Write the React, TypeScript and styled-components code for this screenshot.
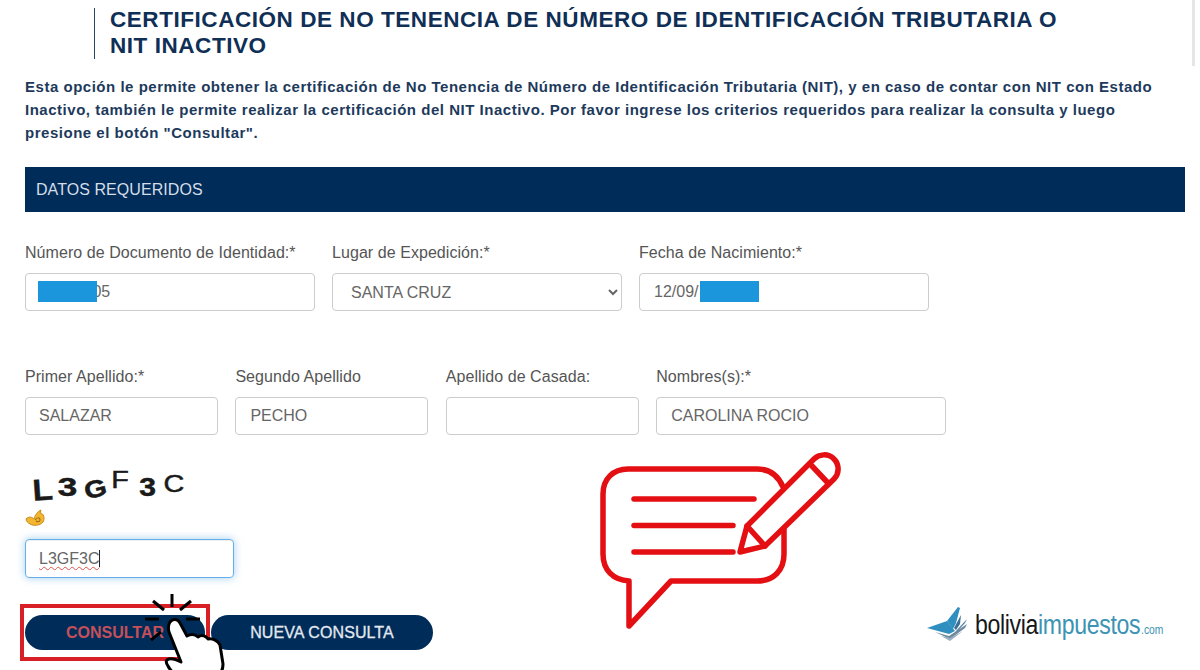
import React from "react";
import styled, { createGlobalStyle } from "styled-components";

const GlobalStyle = createGlobalStyle`
  html, body {
    margin: 0;
    padding: 0;
    background: #fff;
    overflow: hidden;
  }
  * { box-sizing: border-box; }
`;

const Page = styled.div`
  position: relative;
  width: 1200px;
  height: 670px;
  overflow: hidden;
  padding: 8px 15px 0 25px;
  font-family: "Liberation Sans", Arial, sans-serif;
  color: #555;
`;

const ScrollThumb = styled.div`
  position: absolute;
  top: 0;
  right: 5px;
  width: 3px;
  height: 66px;
  background: #e6e6e6;
`;

const TitleBlock = styled.div`
  display: flow-root;
  margin-left: 69px;
  padding-left: 15px;
  border-left: 1px solid #2a4465;
  width: 970px;
  height: 51px;
`;

const Title = styled.h1`
  margin: -1px 0 0;
  font-size: 22.5px;
  line-height: 25.5px;
  font-weight: 700;
  color: #0f2f56;
  letter-spacing: 0.55px;
`;

const Intro = styled.p`
  margin: 16px 0 0;
  font-size: 15px;
  line-height: 23px;
  font-weight: 700;
  color: #1d3a5c;
  letter-spacing: 0.52px;
  width: 1150px;
`;

const SectionBar = styled.div`
  margin-top: 23px;
  height: 45px;
  display: flex;
  align-items: center;
  padding-left: 11px;
  background: #002c5a;
  color: #d5dde6;
  font-size: 16px;
  letter-spacing: 0.06px;
`;

const FieldRow = styled.div<{ $top: number; $gap: number }>`
  display: flex;
  gap: ${(p) => p.$gap}px;
  margin-top: ${(p) => p.$top}px;
`;

const Field = styled.div<{ $width: number }>`
  width: ${(p) => p.$width}px;
  position: relative;
`;

const Label = styled.div`
  font-size: 16px;
  line-height: 17px;
  letter-spacing: 0.06px;
  color: #555;
  margin-bottom: 12px;
  white-space: nowrap;
`;

const Input = styled.input<{ $pad?: number }>`
  display: block;
  width: 100%;
  height: 38px;
  padding: 0 ${(p) => p.$pad ?? 14}px;
  border: 1px solid #ccc;
  border-radius: 4px;
  background: #fff;
  color: #666;
  font: 16px "Liberation Sans", Arial, sans-serif;
  outline: none;
`;

const SelectBox = styled.select`
  display: block;
  width: 100%;
  height: 38px;
  margin-top: 1px;
  padding: 0 14px;
  border: 1px solid #ccc;
  border-radius: 4px;
  background: #fff;
  color: #666;
  font: 16px "Liberation Sans", Arial, sans-serif;
  outline: none;
`;

const Redaction = styled.div<{ $left: number; $width: number }>`
  position: absolute;
  left: ${(p) => p.$left}px;
  bottom: 9px;
  width: ${(p) => p.$width}px;
  height: 21px;
  background: #1b96dc;
`;

const LowerArea = styled.div`
  display: flex;
  margin-top: 36px;
`;

const LeftColumn = styled.div`
  position: relative;
  width: 408px;
  flex: none;
`;

const Captcha = styled.div`
  display: flex;
  align-items: flex-end;
  height: 34px;
  padding-left: 8px;
  color: #1a1a1a;
  font-family: "Liberation Sans", Arial, sans-serif;
`;

const CaptchaChar = styled.span<{ $size: number; $w: number; $rot: number; $up: number; $sx: number; $bold?: boolean; $gap?: number }>`
  display: inline-block;
  width: ${(p) => p.$w}px;
  text-align: center;
  font-size: ${(p) => p.$size}px;
  font-weight: ${(p) => (p.$bold ? 700 : 400)};
  line-height: 1;
  margin-right: ${(p) => p.$gap ?? 2}px;
  -webkit-text-stroke: 0.5px #1a1a1a;
  transform: translateY(${(p) => -p.$up}px) rotate(${(p) => p.$rot}deg) scaleX(${(p) => p.$sx});
`;

const RefreshIcon = styled.svg`
  display: block;
  margin-top: 3px;
  width: 22px;
  height: 20px;
`;

const FocusInput = styled.div`
  display: flex;
  align-items: center;
  width: 209px;
  height: 39px;
  margin-top: 11px;
  padding-left: 13px;
  border: 1px solid #66afe9;
  border-radius: 4px;
  box-shadow: inset 0 1px 1px rgba(0, 0, 0, 0.075), 0 0 8px rgba(102, 175, 233, 0.6);
  color: #666;
  font-size: 16px;
`;

const Misspelled = styled.span`
  text-decoration: underline wavy #d9534f 1px;
  text-underline-offset: 2px;
`;

const Caret = styled.span`
  display: inline-block;
  width: 1px;
  height: 17px;
  background: #222;
`;

const ButtonRow = styled.div`
  display: flex;
  gap: 6px;
  margin-top: 37px;
`;

const PillButton = styled.button<{ $width: number; $danger?: boolean }>`
  width: ${(p) => p.$width}px;
  height: 35px;
  border: none;
  border-radius: 18px;
  background: #002c5a;
  color: ${(p) => (p.$danger ? "#c4505a" : "#e4e9ef")};
  font: 700 16px "Liberation Sans", Arial, sans-serif;
  padding: 0;
`;

const SecondaryButton = styled(PillButton)`
  font-weight: 400;
  letter-spacing: 0.1px;
  -webkit-text-stroke: 0.3px #e4e9ef;
`;

const RedFrame = styled.div`
  position: absolute;
  left: -5px;
  top: 133px;
  width: 190px;
  height: 57px;
  border: 4px solid #d81f26;
`;

const HandOverlay = styled.svg`
  position: absolute;
  left: 90px;
  top: 121px;
  width: 90px;
  height: 80px;
  overflow: visible;
`;

const ChatIcon = styled.svg`
  display: block;
  flex: none;
  margin: -32px 0 0 157px;
  width: 260px;
  height: 200px;
`;

const Logo = styled.div`
  position: absolute;
  right: 55px;
  bottom: 27px;
  display: flex;
  align-items: center;
  gap: 6px;
`;

const LogoMark = styled.svg`
  width: 42px;
  height: 36px;
`;

const LogoText = styled.div`
  display: flex;
  align-items: baseline;
  font-family: "Liberation Sans", Arial, sans-serif;
  font-size: 27px;
  letter-spacing: -0.4px;
  transform: scaleX(0.855);
  transform-origin: left center;
  width: 170px;
  white-space: nowrap;
`;

const LogoDark = styled.span`
  color: #15171a;
`;

const LogoBlue = styled.span`
  color: #3c93b4;
`;

const LogoCom = styled.span`
  color: #3c93b4;
  font-size: 12px;
  letter-spacing: 0;
  margin-left: 1px;
`;

const captchaChars = [
  { c: "L", size: 30, w: 19, rot: -4, up: 0, sx: 1.1, bold: true, gap: 3 },
  { c: "3", size: 25, w: 25, rot: 0, up: 5, sx: 1.4, bold: true, gap: 3 },
  { c: "G", size: 24, w: 25, rot: -14, up: 4, sx: 1.2, bold: true, gap: 2 },
  { c: "F", size: 24, w: 20, rot: 0, up: 13, sx: 1.2, gap: 7 },
  { c: "3", size: 25, w: 21, rot: 0, up: 5, sx: 1.2, bold: true, gap: 5 },
  { c: "C", size: 24, w: 22, rot: 0, up: 9, sx: 1.2 },
];

export default function App() {
  return (
    <Page>
      <GlobalStyle />
      <ScrollThumb />

      <TitleBlock>
        <Title>CERTIFICACIÓN DE NO TENENCIA DE NÚMERO DE IDENTIFICACIÓN TRIBUTARIA O NIT INACTIVO</Title>
      </TitleBlock>

      <Intro>
        Esta opción le permite obtener la certificación de No Tenencia de Número de Identificación Tributaria (NIT), y en caso de contar con NIT con Estado
        <br />
        Inactivo, también le permite realizar la certificación del NIT Inactivo. Por favor ingrese los criterios requeridos para realizar la consulta y luego
        <br />
        presione el botón "Consultar".
      </Intro>

      <SectionBar>DATOS REQUERIDOS</SectionBar>

      <FieldRow $top={32} $gap={17}>
        <Field $width={290}>
          <Label>Número de Documento de Identidad:*</Label>
          <Input readOnly value="00000005" $pad={13} />
          <Redaction $left={13} $width={59} />
        </Field>
        <Field $width={290}>
          <Label>Lugar de Expedición:*</Label>
          <SelectBox defaultValue="SANTA CRUZ">
            <option>SANTA CRUZ</option>
          </SelectBox>
        </Field>
        <Field $width={290}>
          <Label>Fecha de Nacimiento:*</Label>
          <Input readOnly value="12/09/" />
          <Redaction $left={61} $width={59} />
        </Field>
      </FieldRow>

      <FieldRow $top={57} $gap={17.4}>
        <Field $width={193}>
          <Label>Primer Apellido:*</Label>
          <Input readOnly value="SALAZAR" $pad={13} />
        </Field>
        <Field $width={193}>
          <Label>Segundo Apellido</Label>
          <Input readOnly value="PECHO" />
        </Field>
        <Field $width={193}>
          <Label>Apellido de Casada:</Label>
          <Input readOnly value="" />
        </Field>
        <Field $width={290}>
          <Label>Nombres(s):*</Label>
          <Input readOnly value="CAROLINA ROCIO" />
        </Field>
      </FieldRow>

      <LowerArea>
        <LeftColumn>
          <Captcha>
            {captchaChars.map((ch, i) => (
              <CaptchaChar key={i} $size={ch.size} $w={ch.w} $rot={ch.rot} $up={ch.up} $sx={ch.sx} $bold={ch.bold} $gap={ch.gap}>
                {ch.c}
              </CaptchaChar>
            ))}
          </Captcha>
          <RefreshIcon viewBox="0 0 22 20">
            <path d="M1 11 C4 8 7 9 9 11 C10 7 13 3 16 2 L15 5 C19 5 20 11 18 14 C15 18 8 18 5 16 C3 15 1 13 1 11 Z" fill="#f2b632" stroke="#c98a18" strokeWidth="1" />
            <path d="M10 12 C12 9 15 9 15 12 C15 14 12 14 11 13" fill="none" stroke="#a86f12" strokeWidth="1.2" />
          </RefreshIcon>
          <FocusInput>
            <Misspelled>L3GF3C</Misspelled>
            <Caret />
          </FocusInput>
          <ButtonRow>
            <PillButton $width={180} $danger>CONSULTAR</PillButton>
            <SecondaryButton $width={222}>NUEVA CONSULTA</SecondaryButton>
          </ButtonRow>
          <RedFrame />
          <HandOverlay viewBox="0 0 90 80">
            <g stroke="#000" strokeWidth="3" strokeLinecap="butt" fill="none">
              <path d="M57 2 V15" />
              <path d="M38 9 L49 18" />
              <path d="M76 9 L65 18" />
              <path d="M30 27 H44" />
              <path d="M71 27 H85" />
              <path d="M36 48 L46 40" />
            </g>
            <path
              d="M55 30 C58 26 63 27 65 31 L72 44 C76 42 80 42 83 45 C87 42 91 44 93 47 C98 46 103 49 105 53 L108 72 C108 80 104 84 100 90 H70 C64 86 56 80 53 74 C51 71 50 68 54 67 C58 66 62 68 66 70 L54 40 C53 36 53 33 55 30 Z"
              fill="#fff"
              stroke="#000"
              strokeWidth="3"
              strokeLinejoin="round"
            />
          </HandOverlay>
        </LeftColumn>

        <ChatIcon viewBox="0 0 260 200">
          <g fill="none" stroke="#e30f13" strokeLinejoin="round" strokeLinecap="round">
            <path strokeWidth="5.5" d="M193 48 C188 36 179 30 167 30 H38 C23 30 13 40 13 55 V115 C13 131 23 141 39 142 V187 L81 142 H167 C184 142 194 131 194 115 V90" />
            <path strokeWidth="5.5" d="M44 60 H164 M44 86.5 H143 M44 113 H143" />
            <path strokeWidth="5.5" d="M150 113 L157 87 L224 20 C229 15 238 14 244 20 C250 26 249 35 244 40 L175 107 Z" />
            <path strokeWidth="5.5" d="M157 87 L175 107 M222 27 L238 44" />
          </g>
        </ChatIcon>
      </LowerArea>

      <Logo>
        <LogoMark viewBox="0 0 42 36">
          <path d="M0 21 L20 14 L28 24 L22 27 Z" fill="#2f8fbe" />
          <path d="M20 14 L31 0 L33 1 L29 16 L26 22 Z" fill="#2f8fbe" />
          <path d="M27 21 L34 8 L33 17 L29 23 Z" fill="#3c6f96" />
          <path d="M29 24 L40 12 L38 16 L28 27 Z" fill="#4f7fa3" />
          <path d="M8 25 L22 29 L40 17 L38 21 L23 32 Z" fill="#6d8ba0" />
          <path d="M14 29 L23 34 L36 24 L23 31 Z" fill="#9bb0c0" />
        </LogoMark>
        <LogoText>
          <LogoDark>bolivia</LogoDark>
          <LogoBlue>impuestos</LogoBlue>
          <LogoCom>.com</LogoCom>
        </LogoText>
      </Logo>
    </Page>
  );
}
